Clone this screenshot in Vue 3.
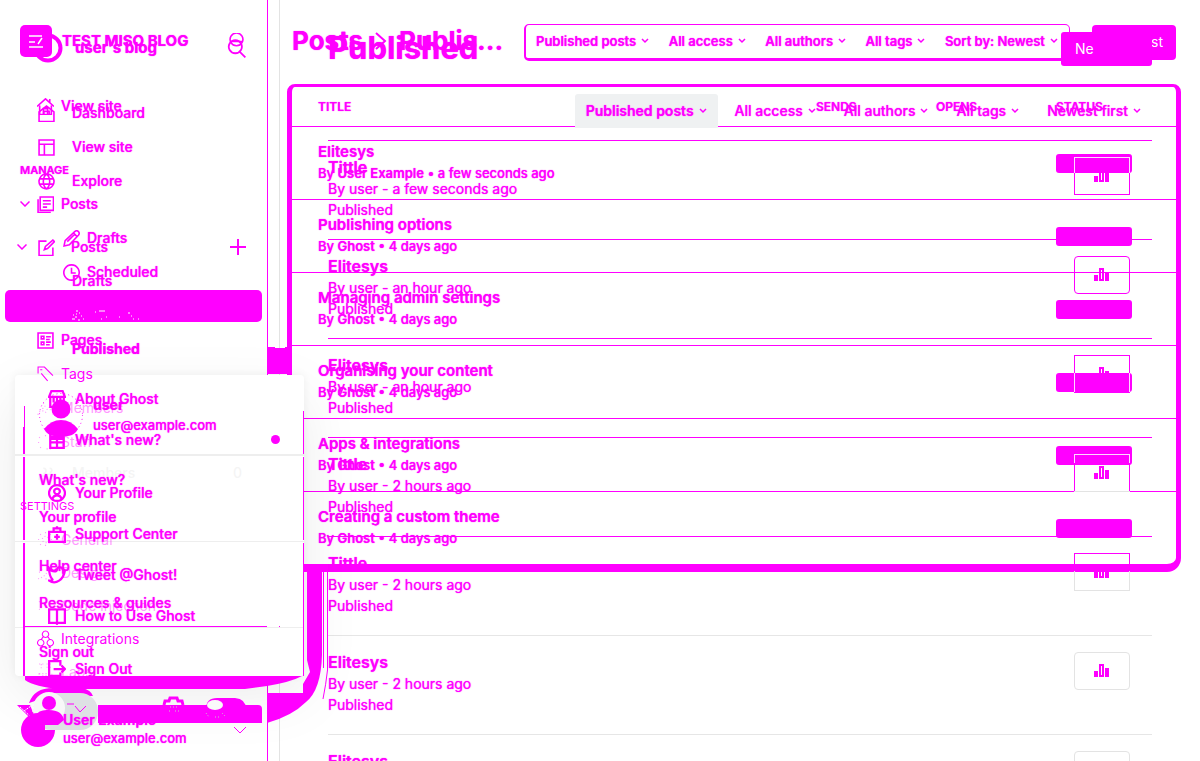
<script setup>
const icons = {
  home: 'M0 8 8 0.8 16 8M2.5 7v8.500H13.500V7M6 15V10h4v5M12 1v3',
  dash: 'M1 6.500 8 1l7 5.500V15.500H1ZM5.500 9V6h5v3',
  layout: 'M1 1h14v14H1ZM1 5h14M6 5v10',
  globe: 'M8 1a7 7 0 1 0 .01 0ZM1.500 5.500h13M1.500 10.500h13M8 1C4 4 4 12 8 15M8 1c4 3 4 11 0 14',
  posts: 'M3 1h12.500v12.500H3ZM1 3v12.500h12M5.500 4.500h7.500M5.500 7.500h7.500M5.500 10.500h4',
  compose: 'M8 2H1v13.500h13V8M6 10l1-3 7-6 1.500 1.500L9 9Z',
  pencil: 'M1 15l1-5L11 1.500Q13 0 14.500 1.500T14.500 5L6 14ZM10 3l3 3M4 11l7-7',
  clock: 'M8 .8a7.200 7.200 0 1 0 .01 0ZM8 3.500V8.500h4',
  pages: 'M1 1h14v14H1ZM4 4h2.500v2.500H4ZM4 9.500h2.500V12H4ZM8.500 4.500H13M8.500 7H12M8.500 9.500H13M8.500 12H12',
  tag: 'M1 7V1h6l8 8M3 3.500h2M4 7l6 7',
  people: 'M1 14c0-5 8-5 8 0M5 8a2.500 2.500 0 1 0 0-5M9 9c4-1 6 1 6 5M11 7a2 2 0 1 0 0-4',
  star: 'M8 1v3M2 3l2 2M14 3l-2 2M1 8h3M3 13l2-2M9 14h4',
  gear: 'M8 5a3 3 0 1 0 .01 0ZM8 1v2M8 13v2M1 8h2M13 8h2M3 3l2 2M11 11l2 2M13 3l-2 2M3 13l2-2',
  pen: 'M1 14l5-2 8-9M2 8l3-3M8 14h3',
  code: 'M2 4l3 4-3 4M12 12l3-2',
  nodes: 'M8 1a3 3 0 1 0 .01 0ZM3.500 9a3 3 0 1 0 .01 0ZM12.500 9a3 3 0 1 0 .01 0ZM6 6l-2 3M10 6l2 3',
  labs: 'M2 1h5M4 1v5M9 1h4M9 4h4M2 10h12v5H2ZM5 12h6',
  search: 'M7 1a5.500 5.500 0 1 0 .01 0ZM11 11l4.500 4.500',
  store: 'M1 6 3 1h10l2 5ZM2 7v8h12V7M5 7v4M8 7v3M11 7v4',
  gift: 'M2 1h12v4H2ZM2 7h12v8H2ZM8 5v10M2 10h12',
  profile: 'M8 1a7 7 0 1 0 .01 0ZM8 4a2.500 2.500 0 1 0 .01 0ZM4 13c1-4 7-4 8 0',
  support: 'M1 6h14v9H1ZM5 6V3h6v3M8 8v5M5.500 10.500h5M8 1v2',
  tweet: 'M1 2c3 4 7 3 7 1 1-3 5-2 5 0l2 1c-1 8-8 13-14 9 3 0 3-1 3-1-3-3-3-7-3-10Z',
  book: 'M1 2h6l1 1 1-1h6v12H9l-1 1-1-1H1ZM8 3v12',
  exit: 'M11 5V1H1v13h10v-3M5 8h10M12 5l3 3-3 3'
}
const oldPosts = [
  { t: 'Posts', i: 'posts', open: true },
  { t: 'Drafts', i: 'pencil', sub: true },
  { t: 'Scheduled', i: 'clock', sub: true },
  { t: '', band: true },
  { t: 'Pages', i: 'pages' },
  { t: 'Tags', i: 'tag', thin: true },
  { t: 'Members', i: 'people', faint: true },
  { t: 'Staff', i: 'star', faint: true }
]
const oldSettings = [
  { t: 'General', i: 'gear', faint: true },
  { t: 'Design', i: 'pen', faint: true },
  { t: 'Code injection', i: 'code', faint: true },
  { t: 'Integrations', i: 'nodes', thin: true },
  { t: 'Labs', i: 'labs', faint: true }
]
const menuGroups = [
  [{ t: 'About Ghost', i: 'store' }, { t: 'What\'s new?', i: 'gift', dot: true }],
  [{ t: 'Your Profile', i: 'profile' }, { t: 'Support Center', i: 'support' }, { t: 'Tweet @Ghost!', i: 'tweet' }, { t: 'How to Use Ghost', i: 'book' }],
  [{ t: 'Sign Out', i: 'exit' }]
]
const rows = [
  ['Elitesys', 'User Example', 'a few seconds ago'],
  ['Publishing options', 'Ghost', '4 days ago'],
  ['Managing admin settings', 'Ghost', '4 days ago'],
  ['Organising your content', 'Ghost', '4 days ago'],
  ['Apps & integrations', 'Ghost', '4 days ago'],
  ['Creating a custom theme', 'Ghost', '4 days ago']
]
const posts = [
  ['Tittle', 'a few seconds ago', 'cut-top'],
  ['Elitesys', 'an hour ago', ''],
  ['Elitesys', 'an hour ago', 'cut-bottom'],
  ['Tittle', '2 hours ago', 'cut-line'],
  ['Tittle', '2 hours ago', 'half'],
  ['Elitesys', '2 hours ago', 'plain'],
  ['Elitesys', '2 hours ago', 'plain']
]
const oldFilters = ['Published posts', 'All access', 'All authors', 'All tags', 'Sort by: Newest']
const newFilters = ['Published posts', 'All access', 'All authors', 'All tags', 'Newest first']
</script>

<template>
  <div class="stage">
    <div class="layer old">
      <aside class="side">
        <div class="old-nav">
          <header class="old-brand">
            <svg class="logo" viewBox="0 0 32 32"><rect width="32" height="32" rx="5" fill="#f0f" /><path d="M9 11h8M9 17h6M9 22h14M18 19l4-6M17 11h5" stroke="#fff" stroke-width="1.500" fill="none" /></svg>
            <b>TEST MISO BLOG</b>
            <button class="bare" aria-label="Search"><svg class="ic" viewBox="0 0 16 16"><path d="M8 0a6 6 0 1 0 .01 0ZM2 8h12" /></svg></button>
          </header>
          <a href="#" class="item first"><svg class="ic" viewBox="0 0 16 16"><path :d="icons.home" /></svg>View site</a>
          <h4>MANAGE</h4>
          <template v-for="n in oldPosts" :key="n.t">
            <div v-if="n.band" class="band">
              <svg viewBox="0 0 80 14"><path d="M5 3h2M2 7h1M5 6h1M8 5h1M4 9h2M10 8h1M1 11h3M7 12h2M12 11h1M24 4h1M28 3h6M35 9h1M30 11h1M48 9h1M57 5h2M60 8h1M67 11h1M62 11h1" /></svg>
            </div>
            <a v-else href="#" class="item" :class="{ sub: n.sub, faint: n.faint, thin: n.thin }">
              <svg v-if="n.open" class="chev" viewBox="0 0 10 6"><path d="M.5.5 5 5 9.500.5" /></svg>
              <svg class="ic" viewBox="0 0 16 16"><path :d="icons[n.i]" /></svg>{{ n.t }}
            </a>
          </template>
          <h4 class="thin">SETTINGS</h4>
          <a v-for="n in oldSettings" :key="n.t" href="#" class="item short" :class="{ faint: n.faint, thin: n.thin }">
            <svg class="ic" viewBox="0 0 16 16"><path :d="icons[n.i]" /></svg>{{ n.t }}
          </a>
        </div>
      </aside>
      <main class="old-main">
        <header class="old-head">
          <h1>Posts<svg viewBox="0 0 12 18"><path d="M1 1l9 8-9 8" /></svg>Publis...</h1>
          <div class="old-filters">
            <button v-for="f in oldFilters" :key="f" class="bare">{{ f }}<svg class="tick" viewBox="0 0 8 6"><path d="M1 1l3 3 3-3" /></svg></button>
          </div>
          <button class="cta">st</button>
        </header>
        <table>
          <thead><tr><th>TITLE</th><th>SENDS</th><th>OPENS</th><th>STATUS</th></tr></thead>
          <tbody>
            <tr v-for="r in rows" :key="r[0]">
              <td><h3>{{ r[0] }}</h3><p>By <b>{{ r[1] }}</b> • {{ r[2] }}</p></td>
              <td></td><td></td><td><span class="badge"></span></td>
            </tr>
          </tbody>
        </table>
      </main>
    </div>

    <svg class="shade" viewBox="0 0 340 761">
      <path d="M267 347h8v1h10v-1h7v27h-25ZM304 564h24v8h-6V655Q321 690 306 702Q292 716 267 723V693H303V684L310 672L307 660V572H304ZM25 676H302Q291 682 267 686L245 689H60Q35 687 25 680Z" />
      <path d="M323.500 572V668M327.500 572V670Q326 684 323 699" class="hair" />
    </svg>

    <div class="layer new">
      <aside class="new-side">
        <header class="new-brand">
          <svg class="ring" viewBox="0 0 30 30"><circle cx="15" cy="15" r="12.500" /></svg>
          <b>user's blog</b>
          <button class="bare" aria-label="Find"><svg class="big" viewBox="0 0 16 16"><path :d="icons.search" /></svg></button>
        </header>
        <a href="#" class="item"><svg class="ic" viewBox="0 0 16 16"><path :d="icons.dash" /></svg>Dashboard</a>
        <a href="#" class="item"><svg class="ic" viewBox="0 0 16 16"><path :d="icons.layout" /></svg>View site</a>
        <a href="#" class="item"><svg class="ic" viewBox="0 0 16 16"><path :d="icons.globe" /></svg>Explore</a>
        <a href="#" class="item gap">
          <svg class="chev" viewBox="0 0 10 6"><path d="M.5.5 5 5 9.500.5" /></svg>
          <svg class="ic" viewBox="0 0 16 16"><path :d="icons.compose" /></svg>Posts
          <svg class="plus" viewBox="0 0 16 16"><path d="M8 0v16M0 8h16" /></svg>
        </a>
        <a href="#" class="item sub">Drafts</a>
        <a href="#" class="item sub">Scheduled</a>
        <a href="#" class="item sub on">Published</a>
        <a href="#" class="item ghosted"><svg class="ic" viewBox="0 0 16 16"><path :d="icons.people" /></svg>Members<i>0</i></a>
      </aside>
      <main class="new-main">
        <header class="new-head"><h1>Published</h1><button class="cta">Ne</button></header>
        <div class="new-filters">
          <button v-for="(f, k) in newFilters" :key="f" class="bare" :class="{ active: k === 0 }">{{ f }}<svg class="tick" viewBox="0 0 8 6"><path d="M1 1l3 3 3-3" /></svg></button>
        </div>
        <ol>
          <li v-for="(p, k) in posts" :key="k" :class="{ plain: k > 4 }">
            <div><h3>{{ p[0] }}</h3><p>By user - {{ p[1] }}</p><p>Published</p></div>
            <button class="stat" :class="p[2]" aria-label="Statistics">
              <svg viewBox="0 0 16 14"><path d="M0 7h4v6H0ZM11 4h4v9h-4Z" fill="#f0f" /><path d="M6 1h3v11H6Z" fill="none" stroke="#f0f" stroke-width="2" /></svg>
            </button>
          </li>
        </ol>
      </main>
    </div>

    <svg class="foot" viewBox="0 0 280 85">
      <path d="M29 27Q34 12 53 12H82Q91 14 93 20H50Z" fill="#f0f" />
      <rect x="33" y="17" width="65" height="37" rx="18" fill="#dee1e4" />
      <path d="M98 29H258Q262 29 262 33V47H98Z" fill="#f0f" />
      <circle cx="49" cy="32" r="16" fill="#f8f8f8" />
      <circle cx="49" cy="27" r="7" fill="#f0f" />
      <path d="M35 40Q39 33 49 34Q62 34 64 44L58 49H37ZM17 29h13l6 15-5-1Z" fill="#f0f" />
      <path d="M20 31l11 10M24 35l7-5M33 28v8" stroke="#fff" stroke-dasharray="2 1" />
      <path d="M38 37a17 17 0 1 0 17 17H45V43H54Q48 37 38 37Z" fill="#f0f" />
      <path d="M67 28h7M75 30l5 6 6-6M234 51l6 6 6-6" class="line" />
      <path d="M164 29l1-4h4l1-3h7l1 3h4l1 4" class="line heavy" />
      <path d="M206 33Q206 22 217 22H235Q246 23 246 33L250 47H240L206 40Z" fill="#f0f" />
      <ellipse cx="215" cy="29" rx="8" ry="5" fill="#fafafa" />
      <path d="M170 31h8M169 35h2M175 35h4M206 37l3 4M215 41h4M222 37l3 3" stroke="#c8c8c8" stroke-dasharray="1 2" />
    </svg>
    <div class="account"><b>User Example</b><span>user@example.com</span></div>

    <section class="menu">
      <div class="who">
        <svg viewBox="0 0 46 46"><circle cx="23" cy="23" r="21.500" fill="none" stroke="#f0f" stroke-dasharray="1 3" /><circle cx="23" cy="17" r="9.500" fill="#f0f" /><path d="M6 37Q13 28 23 28T40 37Q37 43 30 44H16Q9 43 6 37Z" fill="#f0f" /></svg>
        <div><b>user</b><span>user@example.com</span></div>
      </div>
      <nav><a href="#">What's new?</a><a href="#">Your profile</a></nav>
      <nav><a href="#">Help center</a><a href="#">Resources &amp; guides</a></nav>
      <nav><a href="#">Sign out</a></nav>
    </section>

    <section class="old-menu">
      <nav v-for="(g, k) in menuGroups" :key="k">
        <a v-for="m in g" :key="m.t" href="#"><svg class="mic" viewBox="0 0 16 16"><path :d="icons[m.i]" /></svg>{{ m.t }}<i v-if="m.dot"></i></a>
      </nav>
    </section>
    <svg class="edges" viewBox="0 0 340 761">
      <path d="M24.500 406V454M24.500 457V540M24.500 543V676M23.500 427V454M23.500 457V540M23.500 543V676M303.500 411V454M303.500 457V540M303.500 543V676M25 626.500H267M279 626.500h1" />
    </svg>
  </div>
</template>

<style>
body { margin: 0; background: #fff; }
</style>

<style scoped>
* { box-sizing: border-box; }
.stage { position: relative; height: 100vh; overflow: hidden; color: #f0f; font: 500 14px/20px Inter, sans-serif; background: #fff; text-shadow: 0 0 1px #f0f; }
h1, h3, h4, p, ol { margin: 0; padding: 0; }
a { color: inherit; text-decoration: none; }
button { font: inherit; color: inherit; padding: 0; text-shadow: inherit; }
svg { display: block; flex: none; fill: none; }
.bare { border: 0; background: none; display: flex; align-items: center; }
.layer { position: absolute; inset: 0; display: grid; }
.old { grid-template-columns: 268px minmax(0, 1fr); }
.new { grid-template-columns: 280px minmax(0, 1fr); }
.ic, .big, .mic, .chev, .plus, .tick { stroke: #f0f; stroke-width: 1.500; }
.ic { width: 17px; height: 17px; }
.big { width: 19px; height: 19px; }
.plus { width: 16px; height: 16px; margin-left: auto; stroke-width: 2; }
.chev { width: 10px; height: 6px; }
.tick { width: 8px; height: 6px; }
.shade, .edges { position: absolute; left: 0; top: 0; width: 340px; height: 761px; }
.shade { fill: #f0f; z-index: 3; }
.hair { fill: none; stroke: #f0f; }
.edges { stroke: #f0f; z-index: 5; }

.side { border-right: 1px solid #f0f; }
.old-nav { position: relative; z-index: 3; }
.old-brand { display: flex; align-items: center; height: 89px; padding: 0 22px 7px 20px; gap: 10px; }
.old-brand b { font-size: 15px; font-weight: 700; }
.old-brand .bare { margin-left: auto; }
.logo { width: 32px; height: 32px; }
.item { display: flex; align-items: center; height: 34px; }
.old-nav .item { padding-left: 37px; gap: 7px; }
.old-nav .item.sub { padding-left: 63px; }
.old-nav .item .chev { margin-left: -17px; }
.old-nav .item.short { height: 33px; }
.thin, .faint { font-weight: 400; text-shadow: none; }
.faint { opacity: 0.4; }
.thin .ic, .faint .ic { stroke-width: 1; }
.faint .ic { stroke-dasharray: 1 2; }
h4 { font-size: 11px; font-weight: 600; height: 64px; padding: 37px 20px 0; line-height: 20px; }
h4.thin { font-weight: 400; }
.band { height: 32px; margin: 1px 5px; border-radius: 5px; background: #f0f; padding: 18px 66px 0; }
.band svg { width: 80px; height: 14px; stroke: #fff; stroke-width: 1; }

.old-main { padding: 0 19px; min-width: 0; }
.old-head { display: flex; height: 84px; padding: 24px 5px; align-items: center; }
.old-head h1 { font-size: 26px; line-height: 34px; font-weight: 700; display: flex; align-items: center; gap: 12px; padding-bottom: 2px; white-space: nowrap; }
.old-head h1 svg { width: 12px; height: 18px; stroke: #f0f; stroke-width: 2; }
.old-filters { display: flex; justify-content: space-between; margin-left: auto; width: 546px; height: 37px; padding: 0 11px 0 10px; border: 1px solid #f0f; border-width: 1px 1px 3px 2px; border-radius: 5px; font-size: 13px; font-weight: 600; white-space: nowrap; }
.old-filters .bare { gap: 5px; }
.cta { border: 0; background: #f0f; color: #fff; font-weight: 400; text-shadow: none; }
.old-head .cta { width: 84px; height: 35px; border-radius: 4px; margin-left: 22px; padding-right: 13px; text-align: right; }
table { width: 100%; border-collapse: separate; border-spacing: 0; table-layout: fixed; border: solid #f0f; border-width: 3px 5px 8px; border-radius: 8px 8px 14px 8px; }
th { height: 40px; padding: 0; text-align: left; font-size: 12px; font-weight: 600; line-height: 16px; border-bottom: 1px solid #f0f; width: 120px; }
th:first-child { width: auto; padding-left: 26px; }
td { height: 73px; padding: 0; border-bottom: 1px solid #f0f; }
tr:last-child td { height: 72px; border: 0; }
td:first-child { padding: 0 0 2px 26px; }
td h3 { font-size: 15px; line-height: 22px; font-weight: 600; }
td p { font-size: 13px; line-height: 21px; }
td p b { font-weight: 600; }
.badge { display: block; width: 76px; height: 19px; border-radius: 3px; background: #f0f; }

.new-side { border-right: 1px solid #e3e3e3; }
.new-brand { display: flex; align-items: center; height: 96px; padding: 0 33px 0 33px; gap: 12px; }
.new-brand b { font-size: 15px; font-weight: 700; }
.new-brand .bare { margin-left: auto; }
.ring { width: 30px; height: 30px; stroke: #f0f; stroke-width: 4; }
.new-side .item { padding: 0 33px 0 38px; gap: 17px; }
.new-side .sub { padding-left: 72px; }
.gap { margin-top: 32px; }
.gap .chev { margin: 0 -5px 0 -21px; }
.new-side .gap { gap: 16px; }
.on { font-weight: 700; }
.ghosted { position: relative; z-index: 3; margin-top: 90px; opacity: 0.04; color: #000; text-shadow: none; }
.ghosted .ic { stroke: #000; }
.ghosted i { margin-left: auto; margin-right: 4px; font-style: normal; }
.new-main { padding: 32px 48px 0; min-width: 0; }
.new-head { display: flex; justify-content: space-between; height: 62px; }
.new-head h1 { font-size: 31px; line-height: 32px; font-weight: 700; }
.new-head .cta { width: 91px; height: 34px; border-radius: 3px; text-align: left; padding-left: 14px; }
.new-filters { display: flex; justify-content: flex-end; height: 46px; }
.new-filters .bare { height: 34px; padding: 0 11px; gap: 5px; margin-left: 6px; white-space: nowrap; }
.new-filters .bare:first-child { margin: 0; }
.new-filters .active { background: #eff1f2; font-weight: 600; border-radius: 3px 3px 0 0; }
ol { list-style: none; }
li { display: flex; justify-content: space-between; height: 99px; border-top: 1px solid #f0f; padding: 15px 22px 0 0; }
li.plain { border-color: #e6e6e6; }
li h3 { font-size: 16px; line-height: 22px; font-weight: 600; }
li p { font-size: 14px; line-height: 21px; font-weight: 400; }
.stat { width: 56px; height: 38px; margin-top: 1px; border: 1px solid #f0f; border-radius: 4px; background: none; display: flex; align-items: center; justify-content: center; }
.stat svg { width: 16px; height: 14px; }
.cut-top { border-image: linear-gradient(#ffd9ff 16px, #f0f 16px) 1; }
.cut-bottom { border-image: linear-gradient(#f0f 18px, #ffd9ff 18px 37px, #f0f 37px) 1; }
.cut-line { border-image: linear-gradient(#ffd9ff 9px, #f0f 9px 37px, #e3e3e3 37px) 1; }
.half { border-image: linear-gradient(#f0f 18px, #e3e3e3 18px) 1; }
.stat.plain { border-color: #e3e3e3; }

.foot { position: absolute; left: 0; bottom: 0; width: 280px; height: 85px; z-index: 3; }
.line { stroke: #f0f; }
.heavy { stroke-width: 3; }
.account { position: absolute; left: 63px; bottom: 14px; z-index: 3; display: grid; font-size: 13px; line-height: 18px; }
.account b { font-size: 14px; font-weight: 600; }

.menu { position: absolute; z-index: 2; left: 15px; top: 375px; width: 289px; background: #fff; border-radius: 4px; box-shadow: 0 0 8px rgba(0, 0, 0, 0.06), 0 20px 60px rgba(0, 0, 0, 0.08); }
.who { display: flex; align-items: center; height: 81px; padding-left: 23px; gap: 9px; border-bottom: 2px solid #eee; }
.who svg { width: 46px; height: 46px; }
.who div { display: grid; }
.who b { font-weight: 700; }
.who span { font-size: 13px; }
.menu nav { padding: 5px 24px 6px; border-top: 1px solid #eee; }
.menu .who + nav { border-top: 0; }
.menu nav a { display: flex; align-items: center; height: 37px; }
.old-menu { position: absolute; z-index: 4; left: 24px; top: 378px; width: 280px; }
.old-menu nav { margin-bottom: 12px; }
.old-menu a { display: flex; align-items: center; height: 41px; padding: 0 24px; gap: 9px; }
.mic { width: 18px; height: 18px; stroke-width: 2; }
.old-menu i { width: 9px; height: 9px; border-radius: 50%; background: #f0f; margin-left: auto; }
</style>
